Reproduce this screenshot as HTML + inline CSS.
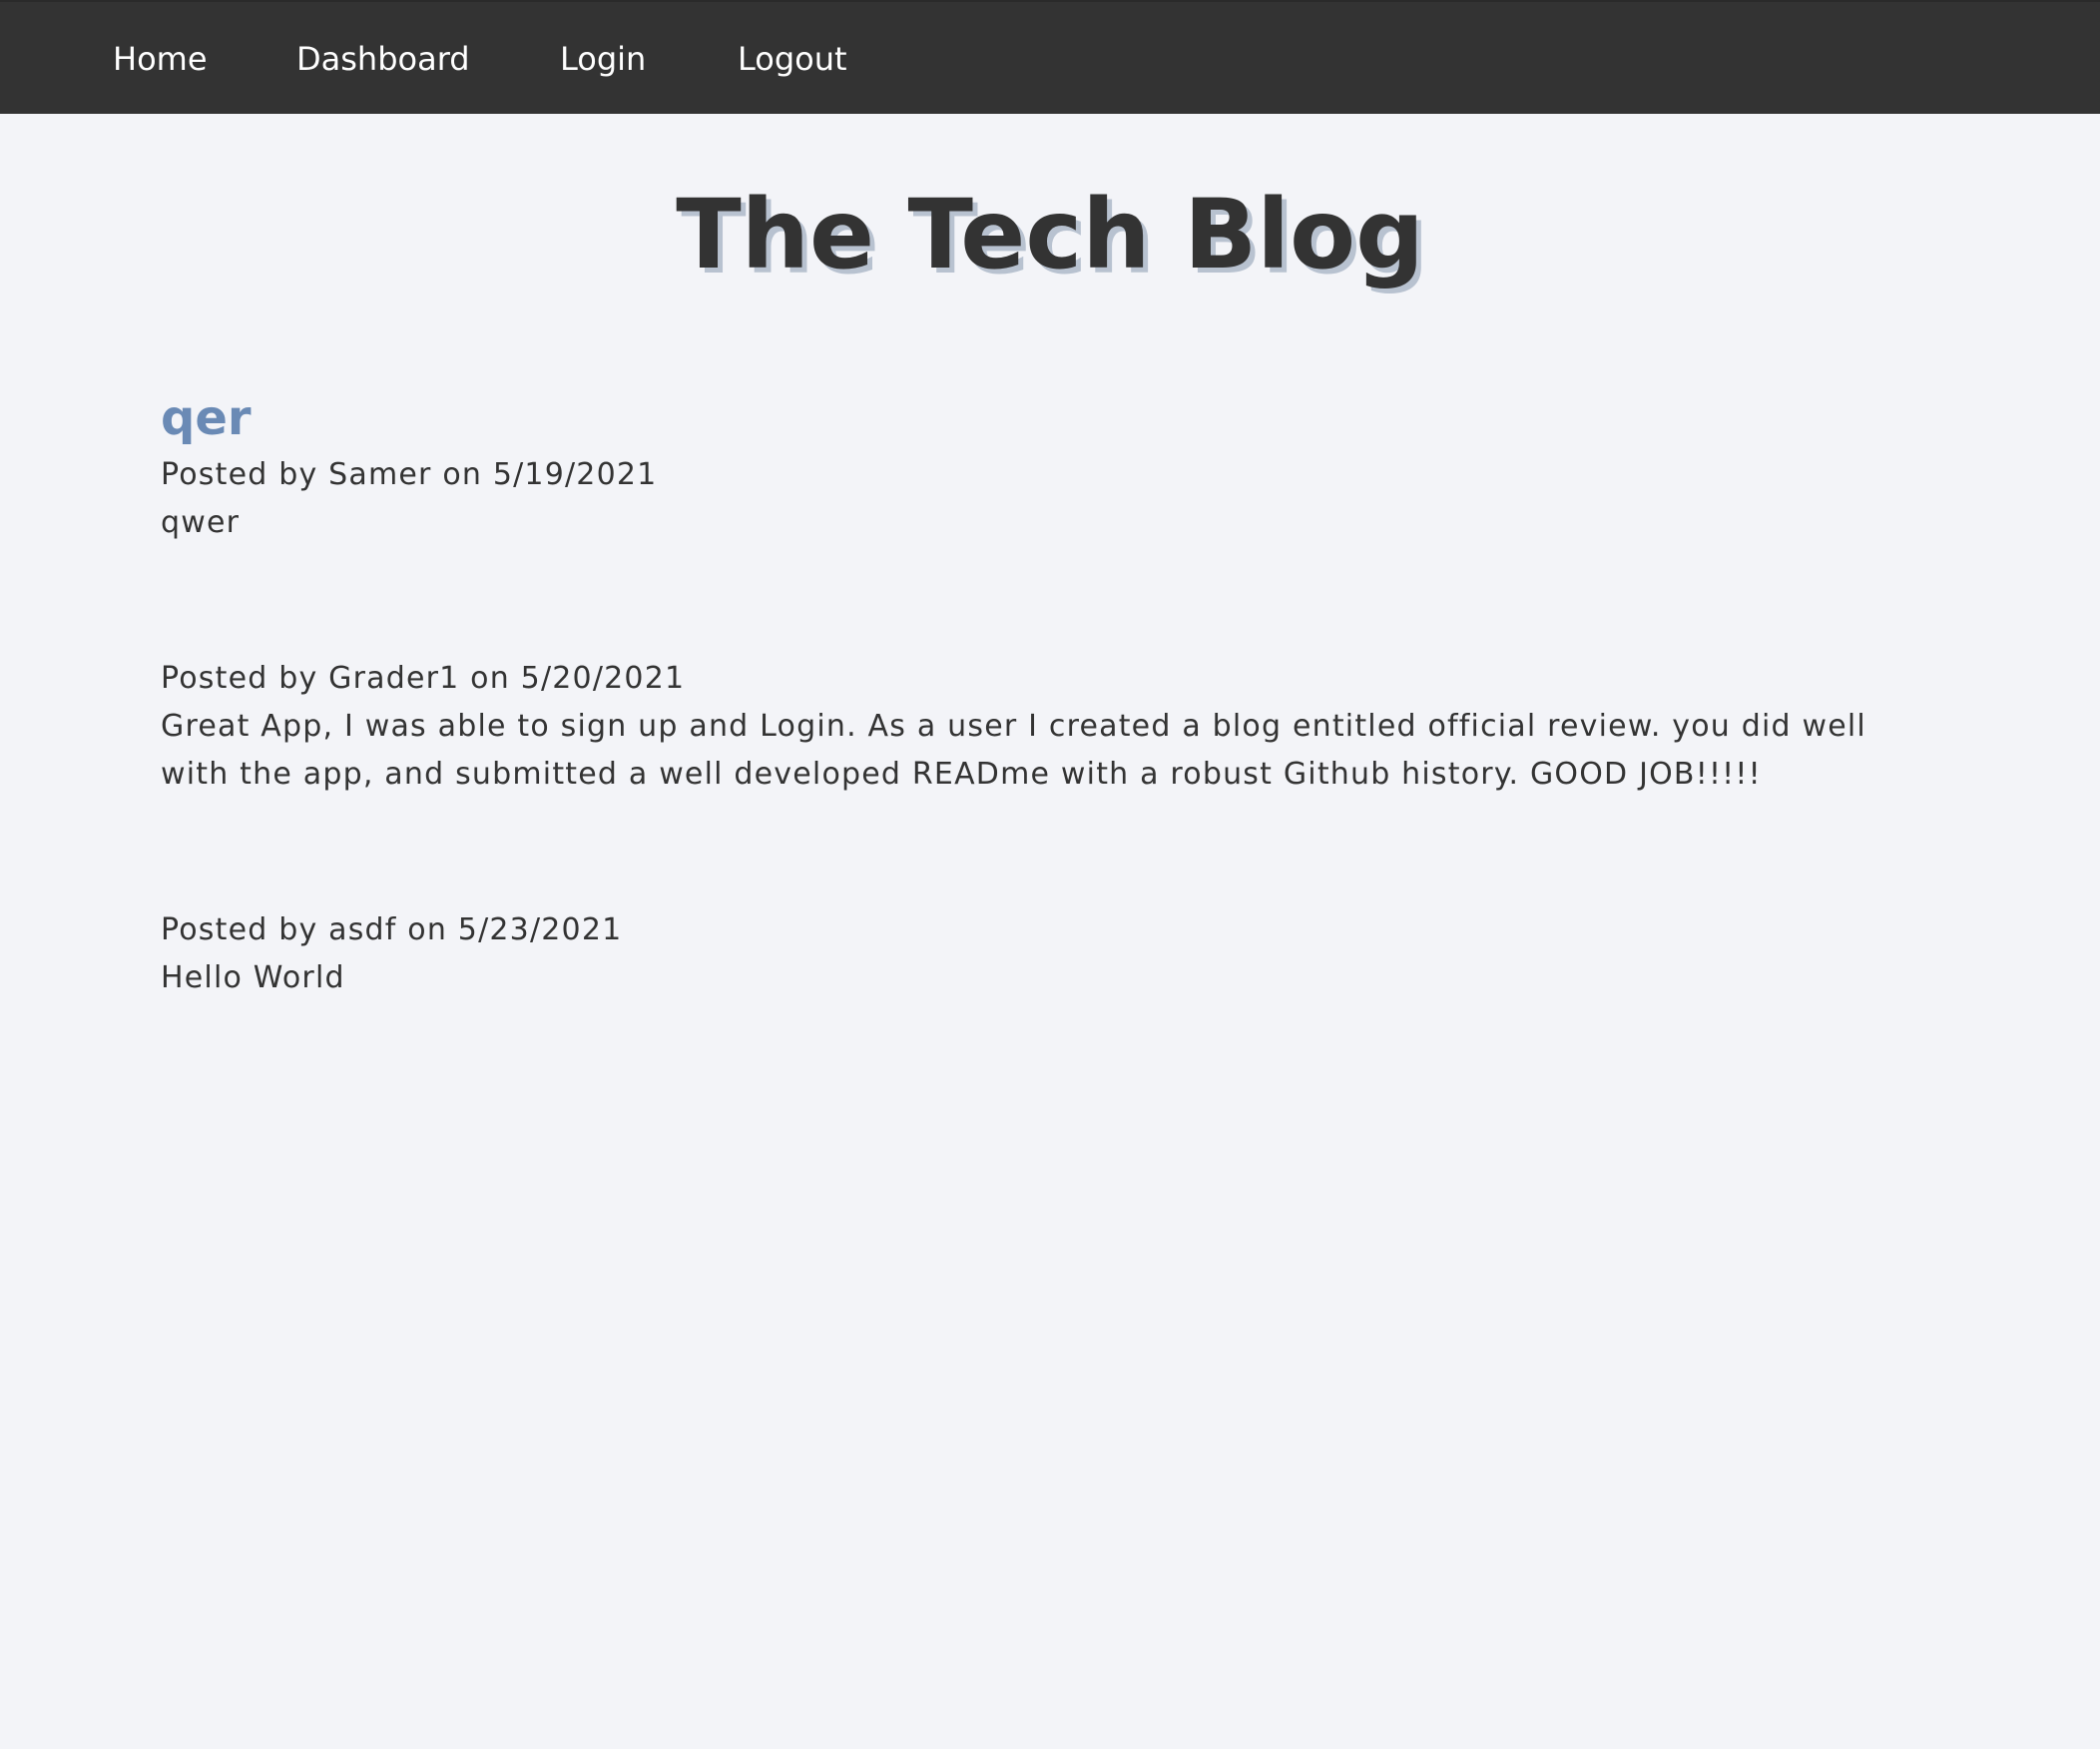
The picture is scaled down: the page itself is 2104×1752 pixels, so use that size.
<!DOCTYPE html>
<html><head><meta charset="utf-8"><style>
html,body{margin:0;padding:0;}
body{width:2104px;height:1752px;background:#f3f4f8;font-family:"DejaVu Sans","Liberation Sans",sans-serif;color:#333;position:relative;overflow:hidden;}
.nav{position:absolute;left:0;top:0;width:2104px;height:114px;background:#333;border-top:2px solid #2a2a2a;box-sizing:border-box;}
.nav a{position:absolute;top:37px;font-size:32px;line-height:40px;color:#fff;text-decoration:none;}
.t{position:absolute;left:0;width:2104px;top:175px;text-align:center;font-size:96px;line-height:120px;font-weight:bold;color:#333;text-shadow:5px 5px 0 #b8c2d0;}
.p{position:absolute;left:161px;width:1782px;font-size:30px;line-height:48px;color:#333;letter-spacing:1.2px;}
.h{position:absolute;left:161px;top:389px;font-size:48px;line-height:60px;font-weight:bold;color:#6a8ab5;}
</style></head><body>
<div class="nav"><a style="left:113px">Home</a><a style="left:297px">Dashboard</a><a style="left:561px">Login</a><a style="left:739px">Logout</a></div>
<div class="t">The Tech Blog</div>
<div class="h">qer</div>
<div class="p" style="top:452px">Posted by Samer on 5/19/2021</div>
<div class="p" style="top:500px">qwer</div>
<div class="p" style="top:656px">Posted by Grader1 on 5/20/2021</div>
<div class="p" style="top:704px">Great App, I was able to sign up and Login. As a user I created a blog entitled official review. you did well<br>with the app, and submitted a well developed READme with a robust Github history. GOOD JOB!!!!!</div>
<div class="p" style="top:908px">Posted by asdf on 5/23/2021</div>
<div class="p" style="top:956px">Hello World</div>
</body></html>
